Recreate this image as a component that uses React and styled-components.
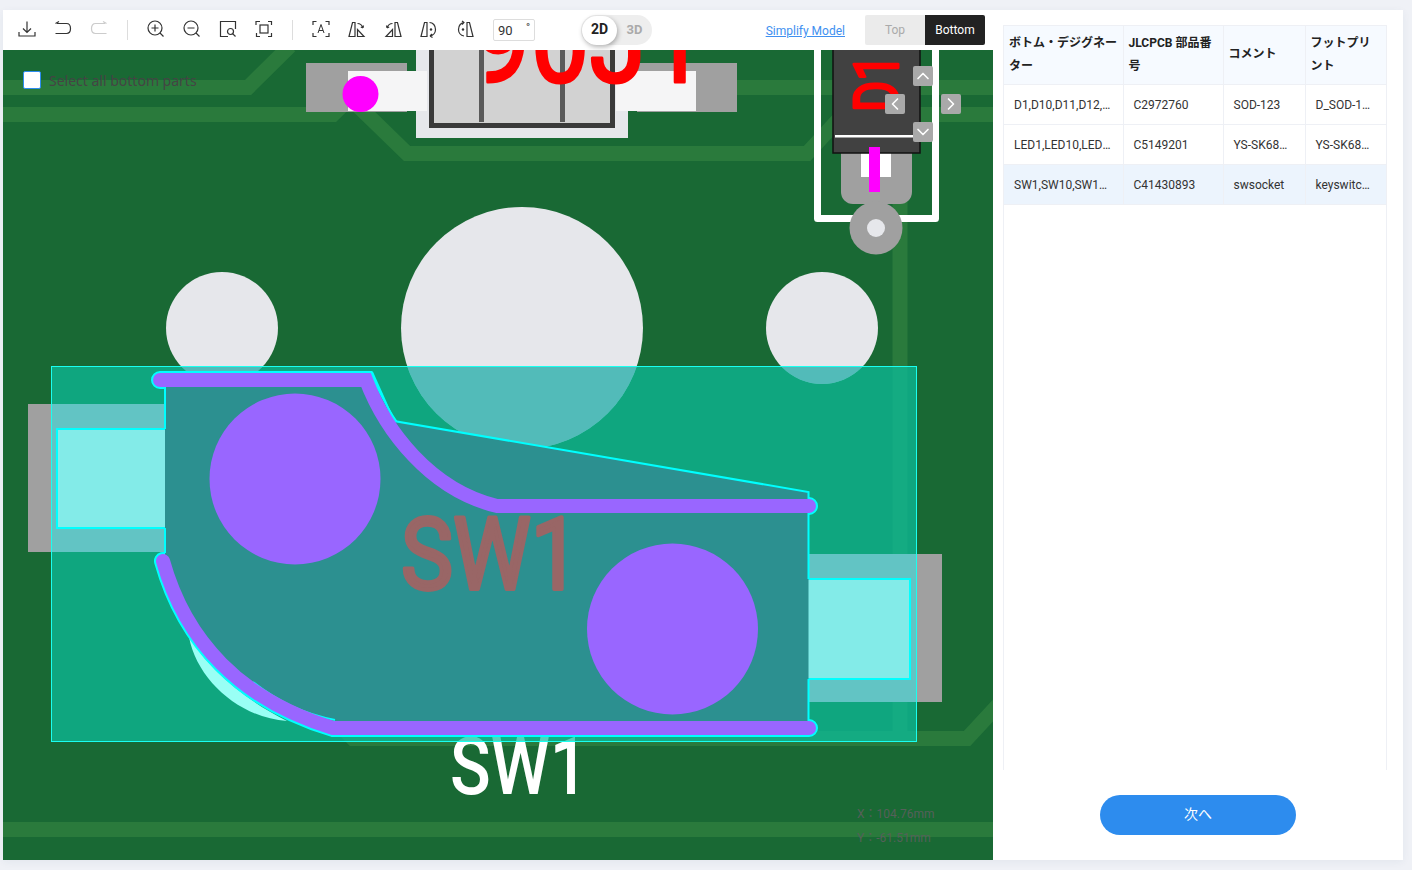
import React, { useState } from 'react';
import styled, { createGlobalStyle } from 'styled-components';
import { ChevronUp, ChevronDown, ChevronLeft, ChevronRight } from 'lucide-react';

const GlobalStyle = createGlobalStyle`
  html, body {
    margin: 0;
    height: 870px;
    overflow: hidden;
    background: #eff1f6;
    font-family: Roboto, "Noto Sans CJK JP", sans-serif;
  }
`;

// layout
const Page = styled.div`
  padding: 10px 0 0 3px;
`;

const Card = styled.div`
  display: flex;
  width: 1400px;
  height: 850px;
  background: #fff;
  box-shadow: 0 2px 8px rgba(40, 60, 100, 0.06);
`;

const LeftColumn = styled.div`
  display: flex;
  flex-direction: column;
  width: 990px;
`;

const Toolbar = styled.div`
  display: flex;
  align-items: center;
  height: 40px;
  padding: 0 8px 0 6px;
  box-sizing: border-box;
`;

const ToolIcon = styled.div`
  display: flex;
  align-items: center;
  justify-content: center;
  width: 36px;
  height: 40px;
  margin-top: -2px;
  color: ${(p) => (p.$disabled ? '#ccc' : '#333')};
`;

const Separator = styled.div`
  width: 1px;
  height: 20px;
  margin: 0 10px;
  background: #ddd;
`;

const AngleBox = styled.div`
  display: flex;
  justify-content: space-between;
  width: 42px;
  height: 22px;
  margin-left: 10px;
  padding: 0 4px;
  box-sizing: border-box;
  border: 1px solid #ddd;
  border-radius: 2px;
  font-size: 13px;
  line-height: 22px;
  color: #333;
`;

const DegreeMark = styled.span`
  font-size: 11px;
  line-height: 16px;
`;

const ModeToggle = styled.div`
  display: flex;
  align-items: center;
  width: 71px;
  height: 30px;
  margin-left: 46px;
  padding-left: 1px;
  box-sizing: border-box;
  border-radius: 15px;
  background: #eeeeee;
`;

const ModeOption = styled.div`
  width: 35px;
  height: 29px;
  border-radius: 15px;
  text-align: center;
  font-size: ${(p) => (p.$active ? '14px' : '13px')};
  font-weight: 700;
  line-height: 27px;
  color: ${(p) => (p.$active ? '#222' : '#aaa')};
  background: ${(p) => (p.$active ? '#fff' : 'transparent')};
  box-shadow: ${(p) => (p.$active ? '1px 2px 5px rgba(0, 0, 0, 0.3)' : 'none')};
`;

const SimplifyLink = styled.a`
  margin: 2px 20px 0 auto;
  font-size: 12px;
  color: #4090f0;
  text-decoration: underline;
`;

const SideToggle = styled.div`
  display: flex;
  height: 30px;
  border-radius: 2px;
  overflow: hidden;
`;

const SideOption = styled.div`
  width: 60px;
  text-align: center;
  font-size: 12px;
  line-height: 30px;
  color: ${(p) => (p.$active ? '#fff' : '#aaa')};
  background: ${(p) => (p.$active ? '#222' : '#ebebeb')};
`;

const Canvas = styled.div`
  position: relative;
  flex: 1;
  overflow: hidden;
  background: #196934;
`;

const BoardSvg = styled.svg`
  display: block;
`;

const SelectAll = styled.label`
  position: absolute;
  left: 20px;
  top: 20px;
  display: flex;
  align-items: center;
  gap: 8px;
  font-family: "Noto Sans", sans-serif;
  font-size: 14px;
  line-height: 18px;
  color: #444;
`;

const SelectAllText = styled.span`
  margin-top: 2px;
`;

const CheckBox = styled.span`
  width: 16px;
  height: 16px;
  border: 1px solid #2d8cf0;
  border-radius: 2px;
  background: #fff;
`;

const ArrowButton = styled.div`
  position: absolute;
  left: ${(p) => p.$left}px;
  top: ${(p) => p.$top}px;
  display: flex;
  align-items: center;
  justify-content: center;
  width: 20px;
  height: 20px;
  border-radius: 2px;
  background: #a9a9a9;
  color: #fff;
`;

const Coords = styled.div`
  position: absolute;
  left: 854px;
  top: 752px;
  font-size: 12px;
  line-height: 24px;
  color: #55605a;
`;

const SidePanel = styled.div`
  display: flex;
  flex-direction: column;
  width: 410px;
  padding: 15px 16px 25px 10px;
  box-sizing: border-box;
`;

const TableWrap = styled.div`
  height: 745px;
  border: 1px solid #eef0f5;
  border-bottom: none;
  box-sizing: border-box;
`;

const PartsTable = styled.table`
  width: 382px;
  table-layout: fixed;
  border-collapse: collapse;
`;

const HeadCell = styled.th`
  height: 58px;
  padding: 0 5px;
  box-sizing: border-box;
  border: 1px solid #eef0f5;
  border-top: none;
  background: #f6faff;
  text-align: left;
  font-size: 12px;
  font-weight: 700;
  line-height: 23px;
  color: #222;
  &:first-child { border-left: none; }
  &:last-child { border-right: none; }
`;

const BodyCell = styled.td`
  height: 40px;
  padding: 1px 10px 0;
  box-sizing: border-box;
  border: 1px solid #eef0f5;
  background: ${(p) => (p.$selected ? '#ecf4fd' : '#fff')};
  font-size: 12px;
  color: #333;
  white-space: nowrap;
  overflow: hidden;
  text-overflow: ellipsis;
  &:first-child { border-left: none; }
  &:last-child { border-right: none; }
`;

const NextButton = styled.button`
  align-self: center;
  width: 196px;
  height: 40px;
  margin-top: 25px;
  margin-left: 6px;
  padding: 0 0 4px;
  border: none;
  border-radius: 20px;
  background: #2d8cee;
  color: #fff;
  font-family: Roboto, "Noto Sans CJK JP", sans-serif;
  font-size: 14px;
`;

// icons
const Glyph = ({ children }) => (
  <svg width="18" height="18" viewBox="0 0 18 18" fill="none" stroke="currentColor" strokeWidth="1.2">
    {children}
  </svg>
);

const toolIcons = {
  download: (
    <>
      <path d="M9 1.5V12M5 8.5L9 12.5L13 8.5" />
      <path d="M1 12V16H17V12" />
    </>
  ),
  undo: <path d="M3 3.5H12.5C15 3.5 16.5 5.5 16.5 8.5C16.5 11.5 15 13.5 12.5 13.5H1.5M1.5 3.5L5 1.5" />,
  redo: <path d="M15 3.5H5.5C3 3.5 1.5 5.5 1.5 8.5C1.5 11.5 3 13.5 5.5 13.5H16.5M16.5 3.5L13 1.5" />,
  zoomIn: (
    <>
      <circle cx="8" cy="8" r="7" />
      <path d="M13 13L16.5 16.5M4.5 8H11.5M8 4.5V11.5" />
    </>
  ),
  zoomOut: (
    <>
      <circle cx="8" cy="8" r="7" />
      <path d="M13 13L16.5 16.5M4.5 8H11.5" />
    </>
  ),
  fit: (
    <>
      <path d="M9 16.5H1.5V1.5H16.5V9" />
      <circle cx="11.5" cy="11.5" r="3" />
      <path d="M13.6 13.6L16.5 16.5" />
    </>
  ),
  focus: (
    <>
      <path d="M1 5V1.5H5M13 1.5H16.5V5M16.5 13V16.5H13M5 16.5H1.5V13" />
      <rect x="5" y="5" width="8" height="8" />
    </>
  ),
  label: (
    <>
      <path d="M1 5V1.5H4.5M13.5 1.5H17V5M17 13V16.5H13.5M4.5 16.5H1V13" />
      <path d="M6 13L9 4.5L12 13M7 10.5H11" strokeWidth="1" />
    </>
  ),
  flipLeft: (
    <>
      <path d="M1 16.5L4.5 2.5H7V16.5Z" />
      <path d="M9.5 16.5H16L9.5 9.5ZM9.5 3.5C12 3.5 14 5 15 8M15 8L15.5 5.5M15 8L12.8 7" />
    </>
  ),
  flipRight: (
    <>
      <path d="M17 16.5L13.5 2.5H11V16.5Z" />
      <path d="M8.5 16.5H2L8.5 9.5ZM8.5 3.5C6 3.5 4 5 3 8M3 8L2.5 5.5M3 8L5.2 7" />
    </>
  ),
  turnRight: (
    <>
      <path d="M1 16.5L4.5 2.5H7V16.5Z" />
      <path d="M9.5 2.5C13 2.5 15.5 5.5 15.5 9.5C15.5 12.5 13.5 15.5 10 16M10 16L12 14M10 16L12.5 17.5" />
      <circle cx="11" cy="9.5" r="1.2" fill="currentColor" stroke="none" />
    </>
  ),
  turnLeft: (
    <>
      <path d="M17 16.5L13.5 2.5H11V16.5Z" />
      <path d="M8.5 2.5C5 2.5 2.5 5.5 2.5 9.5C2.5 12.5 4.5 15.5 8 16M8 2.5L6 1M8 2.5L6 4.5" />
      <circle cx="7" cy="9.5" r="1.2" fill="currentColor" stroke="none" />
    </>
  ),
};

// data
const traces = [
  '3,87.5 248,87.5 290,46',
  '3,114.5 333,114.5 352,96',
  '352,100 407,153.5 807,153.5 838,120',
  '730,87.5 998,87.5',
  '998,114.5 915,114.5 900,130 900,738',
  '335,720 353,738.5 967,738.5 1000,703',
  '3,829.5 993,829.5',
];

const holes = [
  { cx: 222, r: 56 },
  { cx: 522, r: 121 },
  { cx: 822, r: 56 },
];

const columns = [119, 100, 82, 81];

const heads = ['ボトム・デジグネーター', 'JLCPCB 部品番号', 'コメント', 'フットプリント'];

const parts = [
  ['D1,D10,D11,D12,D13,D14', 'C2972760', 'SOD-123', 'D_SOD-123F'],
  ['LED1,LED10,LED11,LED12', 'C5149201', 'YS-SK68MINI-E', 'YS-SK68MINI-E'],
  ['SW1,SW10,SW11,SW12', 'C41430893', 'swsocket', 'keyswitches'],
];

const SILK_FONT = 'Roboto, sans-serif';
const TOP_CURVE = 'M160,380 H366 C385,430 430,490 497,506 H809';
const LOWER_CURVE = 'M163,561 C185,640 240,700 333,728 H809';
const BODY_OUTLINE =
  'M165,387 L372,380 L394,421 L808.5,492 V728 H333 C240,700 185,640 165,561 Z';

const Board = () => (
  <BoardSvg width="990" height="810" viewBox="3 50 990 810">
    <defs>
      <clipPath id="switch-area">
        <rect x="52" y="367" width="864" height="374" />
      </clipPath>
    </defs>

    {traces.map((points) => (
      <polyline key={points} points={points} fill="none" stroke="#2a7a3c" strokeWidth="15" />
    ))}

    <rect x="306" y="63" width="101" height="49" fill="#a0a0a0" />
    <rect x="637" y="63" width="100" height="49" fill="#a0a0a0" />
    <rect x="416" y="44" width="212" height="94" fill="#e6e7eb" />
    <rect x="348" y="71" width="79" height="40" fill="#f5f5f6" />
    <rect x="616" y="71" width="80" height="40" fill="#f5f5f6" />
    <rect x="431.5" y="40" width="181" height="85.5" fill="#d2d2d2" stroke="#3a3a3a" strokeWidth="5" />
    <rect x="479" y="50" width="5" height="72" fill="#5a5a5a" />
    <rect x="560" y="50" width="5" height="72" fill="#5a5a5a" />
    <circle cx="360.5" cy="94" r="18" fill="#ff00ff" />
    <text
      x="472"
      y="82"
      fontFamily={SILK_FONT}
      fontSize="120"
      textLength="234"
      lengthAdjust="spacingAndGlyphs"
      fill="#ff0000"
      stroke="#ff0000"
      strokeWidth="3"
      strokeLinejoin="round"
    >
      90J1
    </text>

    {holes.map((hole) => (
      <circle key={hole.cx} cx={hole.cx} cy="328" r={hole.r} fill="#e6e7eb" />
    ))}

    <path d="M817.5,44V218.5H935.5V44" fill="none" stroke="#fff" strokeWidth="7" strokeLinejoin="round" />
    <rect x="841" y="140" width="71" height="64" rx="12" fill="#a0a0a0" />
    <rect x="861" y="150" width="30" height="27" fill="#fff" />
    <rect x="833" y="44" width="87" height="109" fill="#414141" stroke="#111" strokeWidth="1.5" />
    <rect x="835" y="135" width="80" height="2.5" fill="#fff" />
    <rect x="869" y="147" width="11" height="45" fill="#ff00ff" />
    <circle cx="876" cy="228" r="26.5" fill="#a0a0a0" />
    <circle cx="876" cy="228" r="9" fill="#e6e7eb" />
    <text
      transform="translate(898 112) rotate(-90)"
      fontFamily={SILK_FONT}
      fontSize="62"
      textLength="58"
      lengthAdjust="spacingAndGlyphs"
      fill="#ff0000"
      stroke="#ff0000"
      strokeWidth="3"
      strokeLinejoin="round"
    >
      D1
    </text>

    <text
      x="450"
      y="794"
      fontFamily={SILK_FONT}
      fontWeight="500"
      fontSize="79"
      textLength="138"
      lengthAdjust="spacingAndGlyphs"
      fill="#fff"
    >
      SW1
    </text>

    <rect x="28" y="404" width="137" height="148" fill="#a0a0a0" />
    <rect x="809" y="554" width="133" height="148" fill="#a0a0a0" />
    <rect x="51.5" y="366.5" width="865" height="375" fill="rgba(11, 192, 159, 0.7)" stroke="#19fff0" />
    <g clipPath="url(#switch-area)">
      {holes.map((hole) => (
        <circle key={hole.cx} cx={hole.cx} cy="328" r={hole.r} fill="#52bbb9" />
      ))}
      <rect x="52" y="404" width="113" height="148" fill="#62c4c4" />
      <rect x="809" y="554" width="108" height="148" fill="#62c4c4" />
    </g>

    <rect x="57" y="429" width="110" height="99" fill="#83ebe8" stroke="#00ffff" strokeWidth="2" />
    <rect x="807" y="579" width="103" height="100" fill="#83ebe8" stroke="#00ffff" strokeWidth="2" />
    <path d="M189,637 C197,680 240,718 287,721 C245,700 210,670 189,637Z" fill="#99fff5" />

    <path d={TOP_CURVE} fill="none" stroke="#00ffff" strokeWidth="18" strokeLinecap="round" />
    <path d={LOWER_CURVE} fill="none" stroke="#00ffff" strokeWidth="18" strokeLinecap="round" />
    <path d={BODY_OUTLINE} fill="#2c9090" />
    <path d="M372,372 L394,421 L808.5,492 V499" fill="none" stroke="#00ffff" strokeWidth="2" />
    <path d="M165,387 V429 M165,528 V553 M808.5,513 V579 M808.5,679 V721" stroke="#00ffff" strokeWidth="2" />
    <path d="M253,682 C280,703 305,714 335,720" fill="none" stroke="#00ffff" strokeWidth="2" />

    <circle cx="295" cy="479" r="85.5" fill="#9966ff" />
    <circle cx="672.5" cy="629" r="85.5" fill="#9966ff" />
    <path d={TOP_CURVE} fill="none" stroke="#9966ff" strokeWidth="14" strokeLinecap="round" />
    <path d={LOWER_CURVE} fill="none" stroke="#9966ff" strokeWidth="14" strokeLinecap="round" />

    <text
      x="401"
      y="589"
      fontFamily={SILK_FONT}
      fontSize="100"
      textLength="179"
      lengthAdjust="spacingAndGlyphs"
      fill="#996666"
      stroke="#996666"
      strokeWidth="4"
      strokeLinejoin="round"
    >
      SW1
    </text>
  </BoardSvg>
);

const App = () => {
  const [selected] = useState(2);

  return (
    <Page>
      <GlobalStyle />
      <Card>
        <LeftColumn>
          <Toolbar>
            <ToolIcon><Glyph>{toolIcons.download}</Glyph></ToolIcon>
            <ToolIcon><Glyph>{toolIcons.undo}</Glyph></ToolIcon>
            <ToolIcon $disabled><Glyph>{toolIcons.redo}</Glyph></ToolIcon>
            <Separator />
            <ToolIcon><Glyph>{toolIcons.zoomIn}</Glyph></ToolIcon>
            <ToolIcon><Glyph>{toolIcons.zoomOut}</Glyph></ToolIcon>
            <ToolIcon><Glyph>{toolIcons.fit}</Glyph></ToolIcon>
            <ToolIcon><Glyph>{toolIcons.focus}</Glyph></ToolIcon>
            <Separator />
            <ToolIcon><Glyph>{toolIcons.label}</Glyph></ToolIcon>
            <ToolIcon><Glyph>{toolIcons.flipLeft}</Glyph></ToolIcon>
            <ToolIcon><Glyph>{toolIcons.flipRight}</Glyph></ToolIcon>
            <ToolIcon><Glyph>{toolIcons.turnRight}</Glyph></ToolIcon>
            <ToolIcon><Glyph>{toolIcons.turnLeft}</Glyph></ToolIcon>
            <AngleBox>
              <span>90</span>
              <DegreeMark>°</DegreeMark>
            </AngleBox>
            <ModeToggle>
              <ModeOption $active>2D</ModeOption>
              <ModeOption>3D</ModeOption>
            </ModeToggle>
            <SimplifyLink>Simplify Model</SimplifyLink>
            <SideToggle>
              <SideOption>Top</SideOption>
              <SideOption $active>Bottom</SideOption>
            </SideToggle>
          </Toolbar>
          <Canvas>
            <Board />
            <SelectAll>
              <CheckBox />
              <SelectAllText>Select all bottom parts</SelectAllText>
            </SelectAll>
            <ArrowButton $left={910} $top={16}><ChevronUp size={24} strokeWidth={2} /></ArrowButton>
            <ArrowButton $left={882} $top={44}><ChevronLeft size={24} strokeWidth={2} /></ArrowButton>
            <ArrowButton $left={938} $top={44}><ChevronRight size={24} strokeWidth={2} /></ArrowButton>
            <ArrowButton $left={910} $top={72}><ChevronDown size={24} strokeWidth={2} /></ArrowButton>
            <Coords>
              <div>X：104.76mm</div>
              <div>Y：-61.51mm</div>
            </Coords>
          </Canvas>
        </LeftColumn>
        <SidePanel>
          <TableWrap>
            <PartsTable>
              <colgroup>
                {columns.map((width, index) => (
                  <col key={index} style={{ width }} />
                ))}
              </colgroup>
              <thead>
                <tr>
                  {heads.map((head) => (
                    <HeadCell key={head}>{head}</HeadCell>
                  ))}
                </tr>
              </thead>
              <tbody>
                {parts.map((row, index) => (
                  <tr key={row[1]}>
                    {row.map((cell, cellIndex) => (
                      <BodyCell key={cellIndex} $selected={index === selected}>
                        {cell}
                      </BodyCell>
                    ))}
                  </tr>
                ))}
              </tbody>
            </PartsTable>
          </TableWrap>
          <NextButton>次へ</NextButton>
        </SidePanel>
      </Card>
    </Page>
  );
};

export default App;
